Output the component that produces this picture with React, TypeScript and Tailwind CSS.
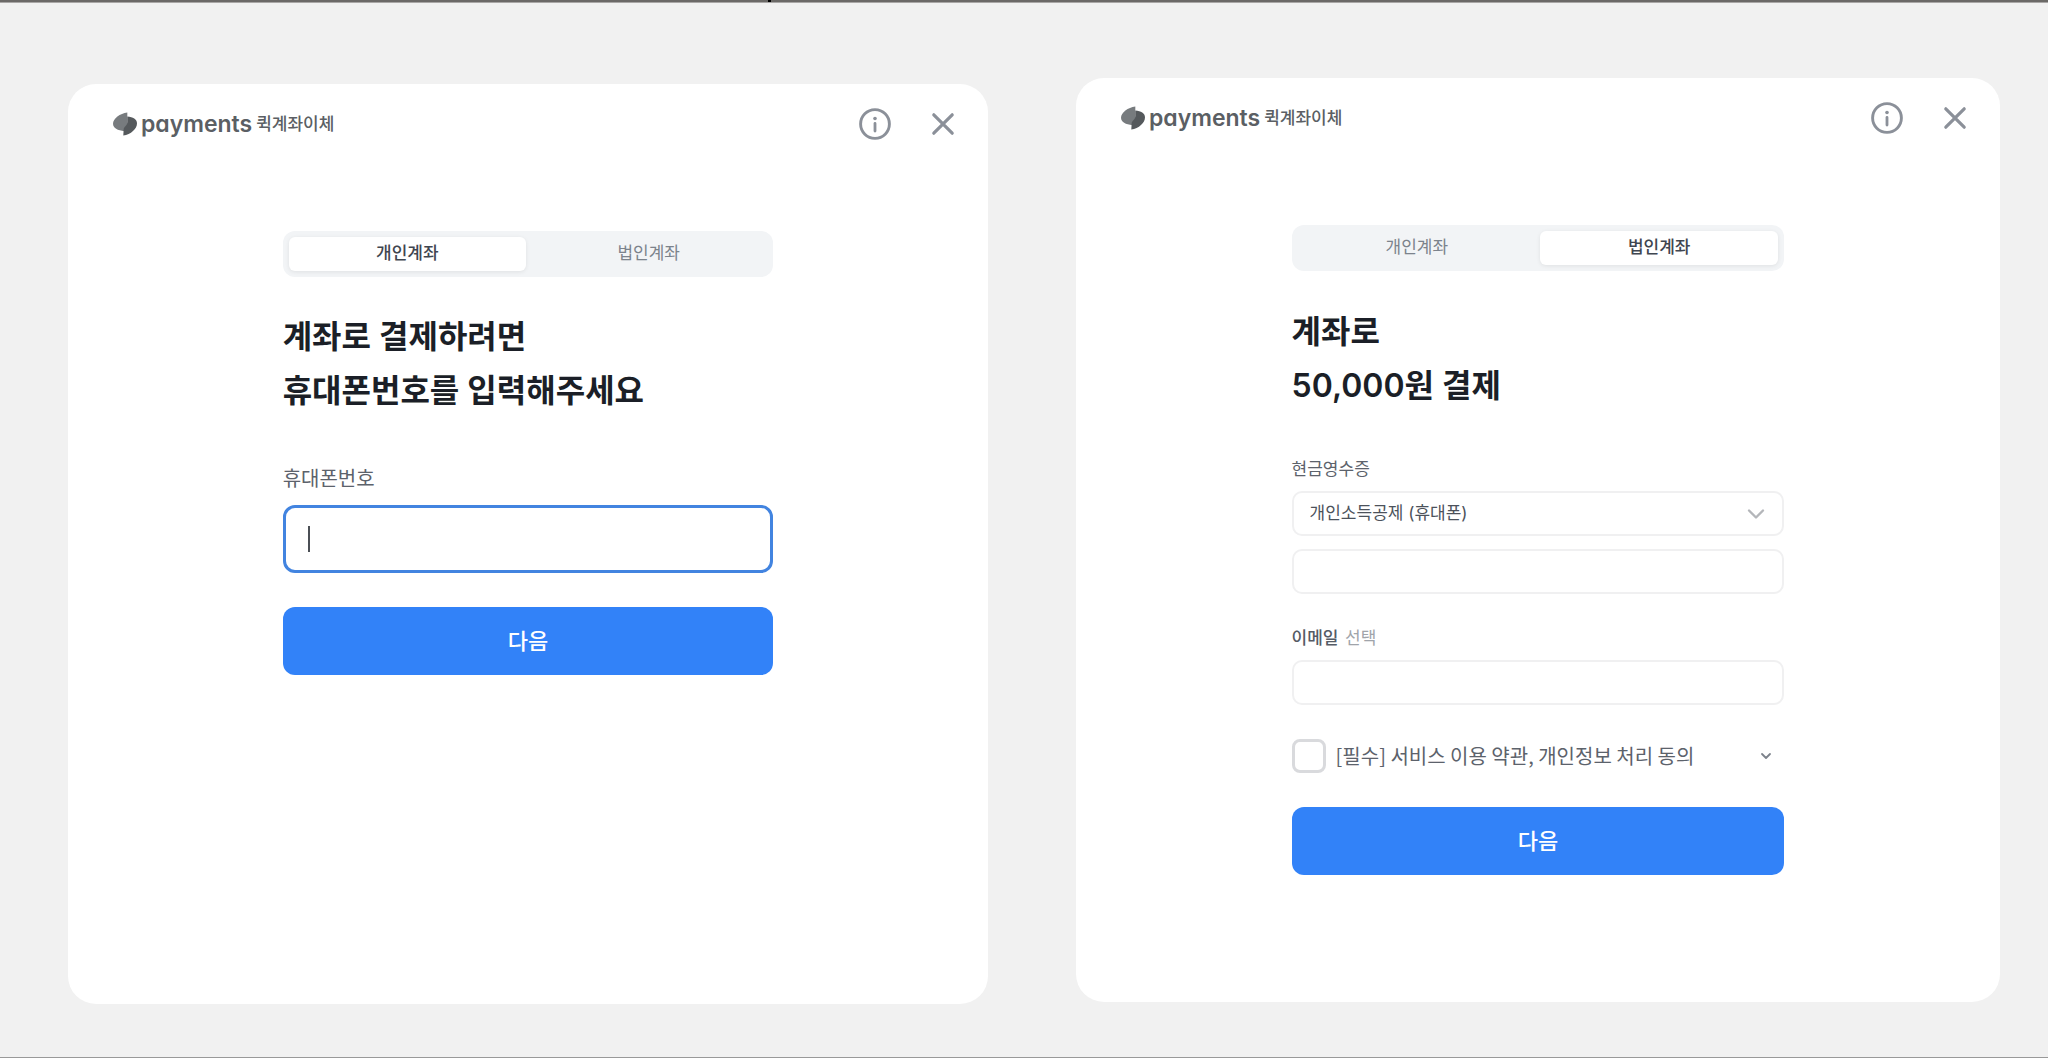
import React, {useState} from "react";

const Logo = () => {
    return (
        <a href="#" className="flex items-center text-[#5b5f64]">
            <svg width="24" height="24" viewBox="0 0 24 24" aria-hidden="true">
                <path d="M14.300 0.500C7 1.500 0 6.500 0 11.800C0 16 4.500 18.600 11.500 19.200L14.300 14Z" fill="#777b7e" />
                <path d="M14.300 4.600C20 5 24 7.600 24 11.200C24 17 18 22.300 10.300 23.500L10.700 17C11 14.500 14.300 14 14.300 10Z" fill="#55595c" />
            </svg>
            <span className="ml-1 text-[23px] leading-8 font-semibold [font-feature-settings:'cv11']">
                payments
            </span>
            <span className="ml-1 text-[17px] leading-8 font-medium">퀵계좌이체</span>
        </a>
    );
};

const CardHeader = () => {
    return (
        <header className="flex h-20 items-center justify-between pr-[29px] pl-[45px]">
            <Logo />
            <div className="flex items-center gap-9 text-[#8b9099]">
                <button type="button" aria-label="안내" className="cursor-pointer">
                    <svg width="32" height="32" viewBox="0 0 32 32" fill="none">
                        <circle cx="16" cy="16" r="14.400" stroke="currentColor" strokeWidth="2.900" />
                        <circle cx="16" cy="10.500" r="1.800" fill="currentColor" />
                        <path d="M16 15.500V23" stroke="currentColor" strokeWidth="2.800" strokeLinecap="round" />
                    </svg>
                </button>
                <button type="button" aria-label="닫기" className="cursor-pointer">
                    <svg width="32" height="32" viewBox="0 0 32 32" fill="none">
                        <path
                            d="M6.800 6.800L25.200 25.200M25.200 6.800L6.800 25.200"
                            stroke="currentColor"
                            strokeWidth="3.200"
                            strokeLinecap="round"
                        />
                    </svg>
                </button>
            </div>
        </header>
    );
};

const tabs = ["개인계좌", "법인계좌"];

const AccountTabs = ({initial}: {initial: number}) => {
    const [active, setActive] = useState(initial);

    return (
        <div role="tablist" className="grid grid-cols-2 gap-1 rounded-xl bg-[#f2f4f6] p-1.5">
            {tabs.map((tab, i) => (
                <button
                    key={tab}
                    type="button"
                    role="tab"
                    aria-selected={active === i}
                    onClick={() => setActive(i)}
                    className={
                        active === i
                            ? "h-[34px] rounded-md bg-white text-[17px] font-medium text-[#3f4650] shadow-[0_1px_4px_rgba(0,0,0,0.08)]"
                            : "h-[34px] rounded-md text-[17px] text-[#7c838c]"
                    }
                >
                    {tab}
                </button>
            ))}
        </div>
    );
};

const NextButton = () => {
    return (
        <button
            type="submit"
            className="mt-[34px] h-[68px] w-full cursor-pointer rounded-xl bg-[#3282f8] text-[22px] font-medium text-white"
        >
            다음
        </button>
    );
};

const PersonalCard = () => {
    const [phone, setPhone] = useState("");

    return (
        <section className="mt-1.5 aspect-square rounded-[28px] bg-white">
            <CardHeader />
            <form className="mx-auto mt-[67px] w-8/15" onSubmit={(e) => e.preventDefault()}>
                <AccountTabs initial={0} />
                <h1 className="mt-[33px] text-[32px] leading-[54px] font-semibold text-[#1b1f27]">
                    계좌로 결제하려면
                    <br />
                    휴대폰번호를 입력해주세요
                </h1>
                <label htmlFor="phone" className="mt-[47px] block text-[20px] leading-7 text-[#5c626b]">
                    휴대폰번호
                </label>
                <div className="relative mt-3">
                    <input
                        id="phone"
                        type="tel"
                        value={phone}
                        onChange={(e) => setPhone(e.target.value)}
                        className="peer block h-[68px] w-full rounded-xl border-3 border-[#4284e0] bg-white px-6 text-[20px] outline-none"
                    />
                    {phone === "" && (
                        <span className="pointer-events-none absolute top-[21px] left-[25px] h-[26px] w-[2px] bg-[#4b4f55] peer-focus:hidden" />
                    )}
                </div>
                <NextButton />
            </form>
        </section>
    );
};

const CorporateCard = () => {
    return (
        <section className="aspect-square rounded-[28px] bg-white">
            <CardHeader />
            <form className="mx-auto mt-[67px] w-8/15" onSubmit={(e) => e.preventDefault()}>
                <AccountTabs initial={1} />
                <h1 className="mt-[34px] text-[32px] leading-[54px] font-semibold text-[#1b1f27]">
                    계좌로
                    <br />
                    50,000원 결제
                </h1>

                <label htmlFor="receipt" className="mt-[44px] block text-[17px] leading-6 text-[#5c626b]">
                    현금영수증
                </label>
                <div className="relative mt-2.5">
                    <select
                        id="receipt"
                        className="block h-[45px] w-full appearance-none rounded-[10px] border-2 border-[#f0f0f1] bg-white px-4 text-[17px] text-[#4c525b] outline-none"
                    >
                        <option>개인소득공제 (휴대폰)</option>
                    </select>
                    <svg
                        className="pointer-events-none absolute top-[13px] right-[18px]"
                        width="20"
                        height="20"
                        viewBox="0 0 20 20"
                        fill="none"
                    >
                        <path
                            d="M3 6.500L10 13.500L17 6.500"
                            stroke="#b4b6ba"
                            strokeWidth="2.400"
                            strokeLinecap="round"
                            strokeLinejoin="round"
                        />
                    </svg>
                </div>
                <input
                    type="text"
                    aria-label="현금영수증 번호"
                    className="mt-[13px] block h-[45px] w-full rounded-[10px] border-2 border-[#f0f0f1] bg-white px-4 text-[17px] outline-none"
                />

                <label htmlFor="email" className="mt-8 block text-[17px] leading-6 font-medium text-[#555b65]">
                    이메일 <span className="ml-0.5 font-normal text-[#a0a4aa]">선택</span>
                </label>
                <input
                    id="email"
                    type="email"
                    className="mt-2.5 block h-[45px] w-full rounded-[10px] border-2 border-[#f0f0f1] bg-white px-4 text-[17px] outline-none"
                />

                <div className="mt-[34px] flex items-center">
                    <input
                        id="terms"
                        type="checkbox"
                        className="size-[34px] shrink-0 appearance-none rounded-lg border-3 border-[#d9dadd] bg-white checked:border-[#3282f8] checked:bg-[#3282f8]"
                    />
                    <label
                        htmlFor="terms"
                        className="ml-2.5 flex-1 font-['Noto_Sans_CJK_KR',sans-serif] text-[20px] leading-7 text-[#5c626b]"
                    >
                        [필수] 서비스 이용 약관, 개인정보 처리 동의
                    </label>
                    <button type="button" aria-label="약관 펼치기" className="mr-2.5 cursor-pointer">
                        <svg width="16" height="16" viewBox="0 0 16 16" fill="none">
                            <path
                                d="M4 6L8 10L12 6"
                                stroke="#7c828b"
                                strokeWidth="1.800"
                                strokeLinecap="round"
                                strokeLinejoin="round"
                            />
                        </svg>
                    </button>
                </div>
                <NextButton />
            </form>
        </section>
    );
};

const App = () => {
    return (
        <div className="flex min-h-screen flex-col border-b border-[#999] bg-[#f1f1f1] font-[Inter,'Noto_Sans_CJK_KR',sans-serif]">
            <div className="h-[3px] border-b border-[#a9a7a6] bg-[#6b6967]">
                <div className="ml-[37.5%] h-[2px] w-[3px] bg-black" />
            </div>
            <main className="grid grid-cols-[920fr_924fr] items-start gap-[88px] pt-[75px] pr-12 pb-12 pl-[68px]">
                <PersonalCard />
                <CorporateCard />
            </main>
        </div>
    );
};

export default App;
